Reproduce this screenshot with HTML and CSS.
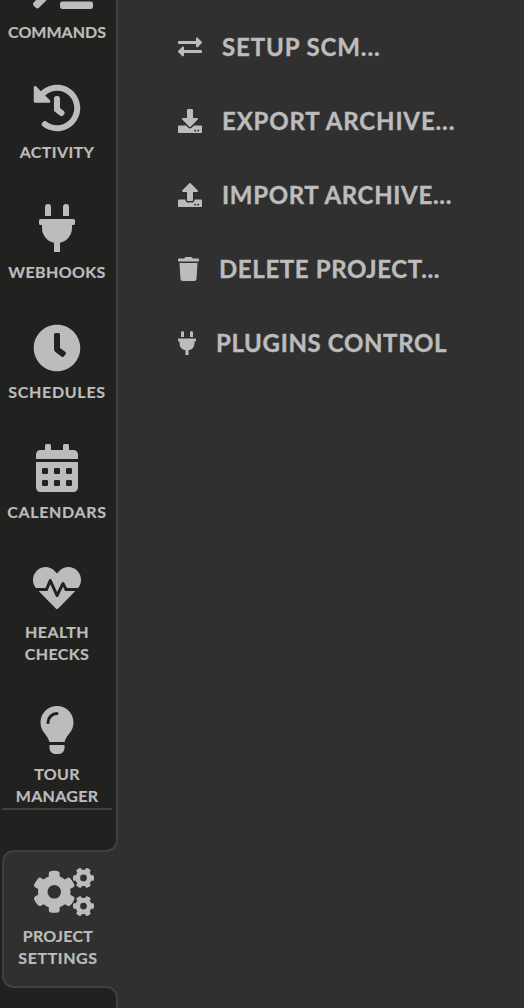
FILE: index.html
```html
<!DOCTYPE html>
<html lang="en">
<head>
<meta charset="utf-8">
<title>Project Settings</title>
<link rel="stylesheet" href="styles.css">
</head>
<body>
<svg class="defs" width="0" height="0" aria-hidden="true">
  <symbol id="plug" viewBox="0 0 384 512"><path d="M320,32a32,32,0,0,0-64,0v96h64Zm48,128H16A16,16,0,0,0,0,176v32a16,16,0,0,0,16,16H32v32A160.07,160.07,0,0,0,160,412.8V512h64V412.8A160.07,160.07,0,0,0,352,256V224h16a16,16,0,0,0,16-16V176A16,16,0,0,0,368,160ZM128,32a32,32,0,0,0-64,0v96h64Z"/></symbol>
</svg>
<div class="app">
  <aside class="sidebar">
    <nav class="nav">
      <a class="item"><svg class="icon wide" viewBox="0 0 640 512"><path d="M257.981 272.971L63.638 467.314c-9.373 9.373-24.569 9.373-33.941 0L7.029 444.647c-9.357-9.357-9.375-24.522-.04-33.901L161.011 256 6.99 101.255c-9.335-9.379-9.317-24.544.04-33.901l22.667-22.667c9.373-9.373 24.569-9.373 33.941 0L257.981 239.03c9.373 9.372 9.373 24.568 0 33.941zM640 456v-32c0-13.255-10.745-24-24-24H312c-13.255 0-24 10.745-24 24v32c0 13.255 10.745 24 24 24h304c13.255 0 24-10.745 24-24z"/></svg><span class="label">COMMANDS</span></a>
      <a class="item"><svg class="icon" viewBox="0 0 512 512"><path d="M504 255.531c.253 136.64-111.18 248.372-247.82 248.468-59.015.042-113.223-20.53-155.822-54.911-11.077-8.94-11.905-25.541-1.839-35.607l11.267-11.267c8.609-8.609 22.353-9.551 31.891-1.984C173.062 425.135 212.781 440 256 440c101.705 0 184-82.311 184-184 0-101.705-82.311-184-184-184-48.814 0-93.149 18.969-126.068 49.932l50.754 50.754c10.08 10.08 2.941 27.314-11.313 27.314H24c-8.837 0-16-7.163-16-16V38.627c0-14.254 17.234-21.393 27.314-11.314l49.372 49.372C129.209 34.136 189.552 8 256 8c136.81 0 247.747 110.78 248 247.531zm-180.912 78.784l9.823-12.63c8.138-10.463 6.253-25.542-4.21-33.679L288 256.349V152c0-13.255-10.745-24-24-24h-16c-13.255 0-24 10.745-24 24v135.651l65.409 50.874c10.463 8.137 25.541 6.253 33.679-4.21z"/></svg><span class="label activity">ACTIVITY</span></a>
      <a class="item"><svg class="icon"><use href="#plug"/></svg><span class="label webhooks">WEBHOOKS</span></a>
      <a class="item"><svg class="icon" viewBox="0 0 512 512"><path d="M256,8C119,8,8,119,8,256S119,504,256,504,504,393,504,256,393,8,256,8Zm92.49,313h0l-20,25a16,16,0,0,1-22.49,2.5h0l-67-49.72a40,40,0,0,1-15-31.23V112a16,16,0,0,1,16-16h32a16,16,0,0,1,16,16V256l58,42.5A16,16,0,0,1,348.49,321Z"/></svg><span class="label schedules">SCHEDULES</span></a>
      <a class="item"><svg class="icon" viewBox="0 0 448 512"><path d="M400 64h-48V16c0-8.800-7.200-16-16-16h-32c-8.800 0-16 7.200-16 16v48H160V16c0-8.800-7.200-16-16-16h-32c-8.800 0-16 7.200-16 16v48H48C21.500 64 0 85.500 0 112v48h448v-48c0-26.500-21.500-48-48-48z"/><path fill-rule="evenodd" d="M0 192h448v272c0 26.500-21.500 48-48 48H48c-26.500 0-48-21.500-48-48zM76 256h40q12 0 12 12v40q0 12-12 12H76q-12 0-12-12v-40q0-12 12-12zM204 256h40q12 0 12 12v40q0 12-12 12h-40q-12 0-12-12v-40q0-12 12-12zM332 256h40q12 0 12 12v40q0 12-12 12h-40q-12 0-12-12v-40q0-12 12-12zM76 384h40q12 0 12 12v40q0 12-12 12H76q-12 0-12-12v-40q0-12 12-12zM204 384h40q12 0 12 12v40q0 12-12 12h-40q-12 0-12-12v-40q0-12 12-12zM332 384h40q12 0 12 12v40q0 12-12 12h-40q-12 0-12-12v-40q0-12 12-12z"/></svg><span class="label calendars">CALENDARS</span></a>
      <a class="item"><svg class="icon" viewBox="0 0 512 512"><path d="M320.2 243.8l-49.7 99.4c-6 12.1-23.4 11.7-28.9-.6l-56.9-126.3-30 71.7H60.6l182.5 186.5c7.1 7.3 18.6 7.3 25.7 0L451.4 288H342.3l-22.1-44.2zM473.7 73.9l-2.4-2.5c-51.5-52.6-135.8-52.6-187.4 0L256 100l-27.9-28.5c-51.5-52.7-135.9-52.7-187.4 0l-2.4 2.4C-10.4 123.7-12.5 203 31 256h102.4l35.9-86.2c5.4-12.9 23.6-13.2 29.4-.4l58.2 129.3 49-97.9c5.9-11.8 22.7-11.8 28.6 0l27.6 55.2H481c43.5-53 41.4-132.3-7.3-182.1z"/></svg><span class="label health">HEALTH<br>CHECKS</span></a>
      <a class="item"><svg class="icon" viewBox="0 0 352 512"><path d="M176 0C77 0 0 79 0 176c0 44 16 84 43 115 17 19 42 58 53 93h160c11-35 36-74 53-93 27-31 43-71 43-115C352 79 275 0 176 0z"/><path d="M96 416h160v32c0 36-28 64-64 64h-32c-36 0-64-28-64-64z"/><path class="shine" d="M80 176c0-53 43-96 96-96"/></svg><span class="label tour">TOUR<br>MANAGER</span></a>
      <div class="divider"></div>
    </nav>
    <div class="active">
      <a class="tab"><svg class="icon wide" viewBox="0 0 640 512"><path d="M386.3 286.1l33.7 16.8c10.1 5.8 14.5 18.1 10.5 29.1-8.9 24.2-26.4 46.4-42.6 65.8-7.4 8.9-20.2 11.1-30.3 5.3l-29.1-16.8c-16 13.7-34.6 24.6-54.9 31.7v33.6c0 11.6-8.3 21.6-19.7 23.6-24.6 4.2-50.4 4.4-75.9 0-11.5-2-20-11.9-20-23.6V418c-20.3-7.2-38.9-18-54.9-31.7L74 403c-10 5.8-22.9 3.6-30.3-5.3-16.2-19.4-33.3-41.6-42.2-65.7-4-10.9.4-23.2 10.5-29.1l33.3-16.8c-3.9-20.9-3.9-42.4 0-63.4L12 205.8c-10.1-5.8-14.6-18.1-10.5-29 8.9-24.2 26-46.4 42.2-65.8 7.4-8.9 20.2-11.1 30.3-5.3l29.1 16.8c16-13.7 34.6-24.6 54.9-31.7V57.1c0-11.5 8.2-21.5 19.6-23.5 24.6-4.2 50.5-4.4 76-.1 11.5 2 20 11.9 20 23.6v33.6c20.3 7.2 38.9 18 54.9 31.7l29.1-16.8c10-5.8 22.9-3.6 30.3 5.3 16.2 19.4 33.2 41.6 42.1 65.800 4 10.900.1 23.200-10 29.100l-33.700 16.800c3.900 21 3.900 42.500 0 63.500zm-98.300-31.500a72 72 0 1 0-144 0a72 72 0 1 0 144 0z" fill-rule="evenodd"/><g fill-rule="evenodd"><path id="small-gear" d="M512.1 191l-8.2 14.3c-3 5.3-9.4 7.5-15.1 5.4-11.8-4.4-22.6-10.7-32.1-18.6-4.6-3.8-5.8-10.5-2.8-15.7l8.2-14.3c-6.9-8-12.3-17.3-15.9-27.4h-16.5c-6 0-11.2-4.3-12.2-10.3-2-12-2.1-24.6 0-37.1 1-6 6.2-10.4 12.2-10.4h16.5c3.6-10.1 9-19.4 15.9-27.4l-8.2-14.3c-3-5.2-1.9-11.9 2.8-15.7 9.5-7.9 20.4-14.2 32.1-18.6 5.7-2.1 12.1.1 15.1 5.4l8.2 14.3c10.5-1.9 21.2-1.9 31.7 0L552 6.3c3-5.3 9.4-7.5 15.1-5.4 11.8 4.4 22.6 10.7 32.1 18.6 4.6 3.8 5.8 10.5 2.8 15.7l-8.2 14.3c6.9 8 12.3 17.3 15.9 27.4h16.5c6 0 11.2 4.3 12.2 10.3 2 12 2.1 24.6 0 37.1-1 6-6.2 10.4-12.2 10.4h-16.5c-3.6 10.1-9 19.4-15.9 27.4l8.2 14.3c3 5.2 1.9 11.9-2.8 15.7-9.5 7.9-20.4 14.2-32.1 18.6-5.7 2.1-12.1-.1-15.1-5.4l-8.2-14.3c-10.4 1.9-21.2 1.9-31.7 0zM564 105.800a36 36 0 1 0-72 0a36 36 0 1 0 72 0z"/><use href="#small-gear" y="300"/></g></svg><span class="label project">PROJECT<br><span class="settings">SETTINGS</span></span></a>
    </div>
    <div class="below"></div>
  </aside>
  <main class="menu">
    <a class="row scm"><svg class="glyph" viewBox="0 0 512 512"><path d="M0 168v-16c0-13.255 10.745-24 24-24h360V80c0-21.367 25.899-32.042 40.971-16.971l80 80c9.372 9.373 9.372 24.569 0 33.941l-80 80C409.956 271.982 384 261.456 384 240v-48H24c-13.255 0-24-10.745-24-24zm488 152H128v-48c0-21.314-25.862-32.08-40.971-16.971l-80 80c-9.372 9.373-9.372 24.569 0 33.941l80 80C102.057 463.997 128 453.437 128 432v-48h360c13.255 0 24-10.745 24-24v-16c0-13.255-10.745-24-24-24z"/></svg><span>SETUP SCM...</span></a>
    <a class="row export"><svg class="glyph" viewBox="0 0 512 512"><path d="M216 0h80c13.3 0 24 10.7 24 24v168h87.7c17.8 0 26.7 21.5 14.1 34.1L269.7 378.3c-7.5 7.5-19.8 7.5-27.3 0L90.1 226.1c-12.6-12.6-3.7-34.1 14.1-34.1H192V24c0-13.3 10.7-24 24-24zm296 376v112c0 13.3-10.7 24-24 24H24c-13.3 0-24-10.7-24-24V376c0-13.3 10.7-24 24-24h146.7l49 49c20.1 20.1 52.5 20.1 72.6 0l49-49H488c13.3 0 24 10.7 24 24zm-124 88c0-11-9-20-20-20s-20 9-20 20 9 20 20 20 20-9 20-20zm64 0c0-11-9-20-20-20s-20 9-20 20 9 20 20 20 20-9 20-20z"/></svg><span>EXPORT ARCHIVE...</span></a>
    <a class="row import"><svg class="glyph" viewBox="0 0 512 512"><path d="M296 384h-80c-13.3 0-24-10.7-24-24V192h-87.7c-17.8 0-26.7-21.5-14.1-34.1L242.3 5.7c7.5-7.5 19.8-7.5 27.3 0l152.2 152.2c12.6 12.6 3.7 34.1-14.1 34.1H320v168c0 13.3-10.7 24-24 24zm216-8v112c0 13.3-10.7 24-24 24H24c-13.3 0-24-10.7-24-24V376c0-13.3 10.7-24 24-24h136v8c0 30.9 25.1 56 56 56h80c30.9 0 56-25.1 56-56v-8h136c13.3 0 24 10.7 24 24zm-124 88c0-11-9-20-20-20s-20 9-20 20 9 20 20 20 20-9 20-20zm64 0c0-11-9-20-20-20s-20 9-20 20 9 20 20 20 20-9 20-20z"/></svg><span>IMPORT ARCHIVE...</span></a>
    <a class="row delete"><svg class="glyph trash" viewBox="0 0 448 512"><path d="M53.2 467a48 48 0 0 0 47.9 45h245.8a48 48 0 0 0 47.9-45L416 128H32zM432 32H312l-9.4-18.7A24 24 0 0 0 281.1 0H166.8a23.72 23.72 0 0 0-21.4 13.3L136 32H16A16 16 0 0 0 0 48v32a16 16 0 0 0 16 16h416a16 16 0 0 0 16-16V48a16 16 0 0 0-16-16z"/></svg><span>DELETE PROJECT...</span></a>
    <a class="row plugins"><svg class="glyph plug"><use href="#plug"/></svg><span>PLUGINS CONTROL</span></a>
  </main>
</div>
</body>
</html>
```
FILE: styles.css
```css
* { box-sizing: border-box; }
body {
  margin: 0;
  background: #303030;
  color: #bcbcbc;
  font-family: Lato, "Noto Sans", sans-serif;
  font-weight: 700;
}
.defs { display: block; }
.app { display: flex; height: 1008px; overflow: hidden; }
.sidebar { display: flex; flex-direction: column; flex: none; width: 118px; height: 1008px; }
svg { fill: #bcbcbc; }

.nav {
  display: flex;
  flex-direction: column;
  justify-content: flex-end;
  gap: 41px;
  flex: none;
  height: 852px;
  padding: 0 2px 40px 0;
  background: #212120;
  border-right: 2px solid #404040;
  border-bottom: 2px solid #404040;
  border-bottom-right-radius: 12px;
  overflow: hidden;
}
.item { display: flex; flex-direction: column; align-items: center; gap: 9px; flex: none; }
.icon { display: block; flex: none; width: 48px; height: 48px; }
.icon.wide { width: 60px; margin-left: 12px; }
.label {
  font-size: 16px;
  line-height: 22px;
  text-align: center;
  white-space: nowrap;
  -webkit-text-stroke: 0.2px #bcbcbc;
}
.activity { letter-spacing: 0.4px; }
.webhooks { letter-spacing: 0.35px; }
.schedules { letter-spacing: 0.7px; }
.calendars { letter-spacing: 0.65px; }
.health { letter-spacing: 0.4px; }
.tour { letter-spacing: 0.3px; }
.project { letter-spacing: 0.3px; }
.settings { letter-spacing: 0.6px; }
.shine { fill: none; stroke: #212120; stroke-width: 32px; stroke-linecap: round; }
.divider { flex: none; width: 110px; height: 2px; margin: -40px 0 0 2px; background: #404040; }

.active {
  position: relative;
  flex: none;
  height: 138px;
  margin-top: -2px;
  padding-left: 2px;
  background: linear-gradient(to right, #212120 14px, transparent 14px);
}
.tab {
  display: flex;
  flex-direction: column;
  align-items: center;
  gap: 9px;
  width: 104px;
  height: 138px;
  padding: 16px 0 0 6px;
  background: #303030;
  border: 2px solid #404040;
  border-right: 0;
  border-radius: 12px 0 0 12px;
}
.below {
  flex: 1;
  margin-top: -2px;
  background: #212120;
  border-top: 2px solid #404040;
  border-right: 2px solid #404040;
  border-top-right-radius: 12px;
}

.menu { display: flex; flex-direction: column; gap: 34px; padding: 27px 0 0 60px; }
.row {
  display: flex;
  align-items: center;
  gap: 20px;
  height: 40px;
  font-size: 24px;
  line-height: 28px;
  white-space: nowrap;
}
.row span { -webkit-text-stroke: 0.4px #bcbcbc; }
.scm { letter-spacing: 0.88px; }
.export { letter-spacing: 0.85px; }
.import { letter-spacing: 0.67px; }
.delete { letter-spacing: 0.62px; }
.plugins { letter-spacing: 0.64px; }
.glyph { flex: none; width: 24px; height: 24px; }
.trash { width: 21px; }
.plug { width: 18px; }
```
